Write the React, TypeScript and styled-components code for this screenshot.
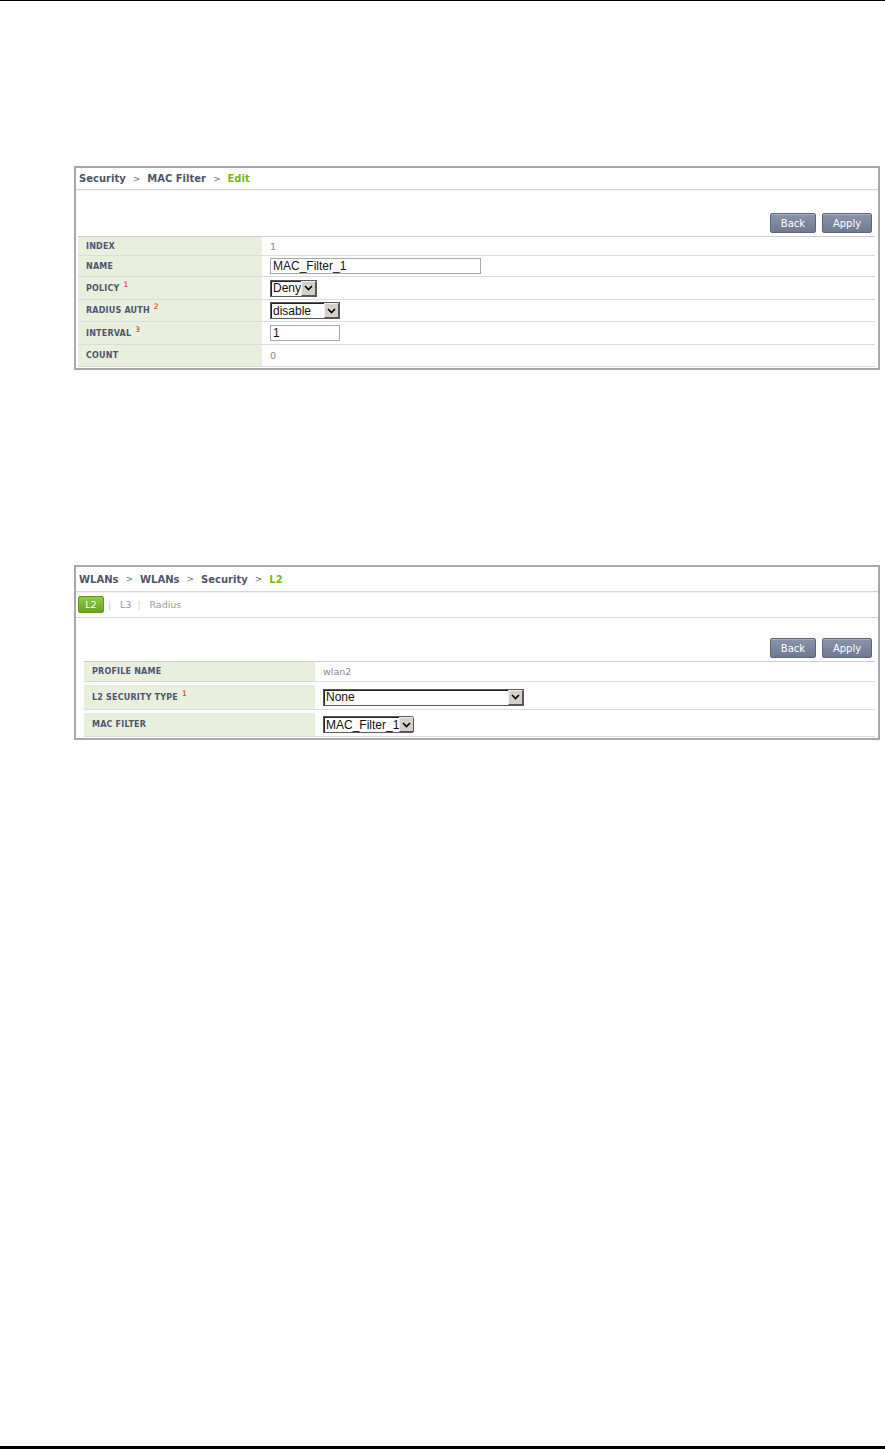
import React from 'react'
import styled, { createGlobalStyle } from 'styled-components'

const GlobalStyle = createGlobalStyle`
  html, body {
    margin: 0;
    padding: 0;
    background: #ffffff;
  }
  body {
    font-family: 'DejaVu Sans', Verdana, sans-serif;
  }
  * {
    box-sizing: border-box;
  }
`

const Page = styled.div({
  width: '885px',
  height: '1449px',
  display: 'flex',
  flexDirection: 'column',
  borderTop: '1px solid #000',
  background: '#fff',
})

const Spacer = styled.div({
  flex: 1,
})

const BottomRule = styled.div({
  height: '3px',
  background: '#000',
})

const Panel = styled.div<{ $top: number }>(props => ({
  marginTop: `${props.$top}px`,
  marginLeft: '74px',
  width: '806px',
  border: '2px solid #a8a8a8',
  background: '#fff',
  paddingBottom: '1px',
}))

const Crumbs = styled.div<{ $height: number }>(props => ({
  height: `${props.$height}px`,
  display: 'flex',
  alignItems: 'center',
  paddingLeft: '3px',
  fontSize: '10px',
  fontWeight: 700,
  color: '#4f5668',
  borderBottom: '1px solid #d6d6d6',
  boxShadow: '0 1px 0 #f2f2f2',
}))

const CrumbSep = styled.span({
  fontWeight: 400,
  color: '#6a6f7a',
  margin: '0 7px',
  fontSize: '9px',
})

const CrumbCurrent = styled.span({
  color: '#7ab51d',
})

const TabRow = styled.div({
  height: '26px',
  display: 'flex',
  alignItems: 'center',
  paddingLeft: '2px',
  borderBottom: '1px solid #d6d6d6',
  fontSize: '9px',
  color: '#a0a0a0',
})

const ActiveTab = styled.div({
  width: '26px',
  height: '17px',
  borderRadius: '2px',
  background: 'linear-gradient(#92c94a, #6aa520)',
  border: '1px solid #5f9a1a',
  color: '#fff',
  fontWeight: 400,
  fontSize: '9.5px',
  display: 'flex',
  alignItems: 'center',
  justifyContent: 'center',
  marginTop: '-1px',
})

const TabSep = styled.span<{ $lead?: number }>(props => ({
  color: '#c8c8c8',
  margin: `0 9px 0 ${props.$lead ?? 6}px`,
}))

const Tab = styled.span({
  color: '#9a9a9a',
  fontSize: '9.5px',
})

const Toolbar = styled.div<{ $height: number }>(props => ({
  height: `${props.$height}px`,
  display: 'flex',
  justifyContent: 'flex-end',
  alignItems: 'flex-end',
  gap: '6px',
  paddingRight: '6px',
  paddingBottom: '3px',
}))

const Button = styled.div<{ $width: number }>(props => ({
  width: `${props.$width}px`,
  height: '20px',
  borderRadius: '2px',
  border: '1px solid #5d667d',
  background: 'linear-gradient(#8a94ac, #6f7992)',
  color: '#fff',
  fontSize: '10px',
  display: 'flex',
  alignItems: 'center',
  justifyContent: 'center',
  boxShadow: 'inset 0 1px 0 rgba(255,255,255,0.25)',
}))

const Table = styled.div<{ $inset: number }>(props => ({
  margin: `0 3px 0 ${props.$inset}px`,
  borderTop: '1px solid #cdcdcd',
}))

const Row = styled.div<{ $height: number; $gap?: number }>(props => ({
  display: 'flex',
  height: `${props.$height + 1}px`,
  borderBottom: '1px solid #dcdcdc',
  marginBottom: `${props.$gap ?? 0}px`,
}))

const Label = styled.div<{ $width: number }>(props => ({
  width: `${props.$width}px`,
  flexShrink: 0,
  background: '#e8efdc',
  display: 'flex',
  alignItems: 'center',
  paddingLeft: '8px',
  fontSize: '8px',
  fontWeight: 700,
  color: '#4d5670',
  letterSpacing: '0.2px',
}))

const Mark = styled.span({
  color: '#e01010',
  fontWeight: 400,
  fontSize: '7.5px',
  marginLeft: '4px',
  position: 'relative',
  top: '-4px',
})

const Value = styled.div({
  flex: 1,
  display: 'flex',
  alignItems: 'center',
  paddingLeft: '8px',
  fontSize: '9.5px',
  color: '#8a8a8a',
})

const TextInput = styled.div<{ $width: number }>(props => ({
  width: `${props.$width}px`,
  height: '16px',
  border: '1px solid #a4a9ae',
  display: 'flex',
  alignItems: 'center',
  paddingLeft: '2px',
  fontFamily: "'Liberation Sans', Arial, sans-serif",
  fontSize: '12px',
  color: '#1a0f1f',
  background: '#fff',
}))

const SelectBox = styled.div<{ $width: number }>(props => ({
  width: `${props.$width}px`,
  height: '17px',
  display: 'flex',
  border: '1px solid #5a5a5a',
  boxShadow: 'inset 1px 1px 0 #222',
  background: '#fff',
  fontFamily: "'Liberation Sans', Arial, sans-serif",
  fontSize: '12px',
  color: '#111',
}))

const SelectText = styled.div({
  flex: 1,
  display: 'flex',
  alignItems: 'center',
  paddingLeft: '2px',
  whiteSpace: 'nowrap',
})

const SelectArrow = styled.div({
  width: '15px',
  flexShrink: 0,
  background: '#d4d0c8',
  borderLeft: '1px solid #eee',
  borderTop: '1px solid #eee',
  borderRight: '1px solid #555',
  borderBottom: '1px solid #555',
  display: 'flex',
  alignItems: 'center',
  justifyContent: 'center',
})

function Select({ width, text }: { width: number; text: string }) {
  return (
    <SelectBox $width={width}>
      <SelectText>{text}</SelectText>
      <SelectArrow>
        <svg width="9" height="6" viewBox="0 0 9 6">
          <path d="M1 1 L4.5 4.5 L8 1" fill="none" stroke="#000" strokeWidth="1.6" />
        </svg>
      </SelectArrow>
    </SelectBox>
  )
}

function Breadcrumb({ items, height }: { items: string[]; height: number }) {
  const last = items[items.length - 1]
  return (
    <Crumbs $height={height}>
      {items.slice(0, -1).map((item, i) => (
        <React.Fragment key={i}>
          <span>{item}</span>
          <CrumbSep>&gt;</CrumbSep>
        </React.Fragment>
      ))}
      <CrumbCurrent>{last}</CrumbCurrent>
    </Crumbs>
  )
}

function Actions({ height }: { height: number }) {
  return (
    <Toolbar $height={height}>
      <Button $width={46}>Back</Button>
      <Button $width={50}>Apply</Button>
    </Toolbar>
  )
}

export default function App() {
  return (
    <>
      <GlobalStyle />
      <Page>
        <Panel $top={165}>
          <Breadcrumb items={['Security', 'MAC Filter', 'Edit']} height={22} />
          <Actions height={46} />
          <Table $inset={2}>
            <Row $height={18}>
              <Label $width={184}>INDEX</Label>
              <Value>1</Value>
            </Row>
            <Row $height={20}>
              <Label $width={184}>NAME</Label>
              <Value>
                <TextInput $width={211}>MAC_Filter_1</TextInput>
              </Value>
            </Row>
            <Row $height={22}>
              <Label $width={184}>
                POLICY<Mark>1</Mark>
              </Label>
              <Value>
                <Select width={47} text="Deny" />
              </Value>
            </Row>
            <Row $height={21}>
              <Label $width={184}>
                RADIUS AUTH<Mark>2</Mark>
              </Label>
              <Value>
                <Select width={70} text="disable" />
              </Value>
            </Row>
            <Row $height={22}>
              <Label $width={184}>
                INTERVAL<Mark>3</Mark>
              </Label>
              <Value>
                <TextInput $width={70}>1</TextInput>
              </Value>
            </Row>
            <Row $height={21}>
              <Label $width={184}>COUNT</Label>
              <Value>0</Value>
            </Row>
          </Table>
        </Panel>

        <Panel $top={195}>
          <Breadcrumb items={['WLANs', 'WLANs', 'Security', 'L2']} height={25} />
          <TabRow>
            <ActiveTab>L2</ActiveTab>
            <TabSep $lead={4}>|</TabSep>
            <Tab>L3</Tab>
            <TabSep>|</TabSep>
            <Tab>Radius</Tab>
          </TabRow>
          <Actions height={43} />
          <Table $inset={8}>
            <Row $height={19} $gap={3}>
              <Label $width={231}>PROFILE NAME</Label>
              <Value>wlan2</Value>
            </Row>
            <Row $height={24} $gap={3}>
              <Label $width={231}>
                L2 SECURITY TYPE<Mark>1</Mark>
              </Label>
              <Value>
                <Select width={201} text="None" />
              </Value>
            </Row>
            <Row $height={23}>
              <Label $width={231}>MAC FILTER</Label>
              <Value>
                <Select width={90} text="MAC_Filter_1" />
              </Value>
            </Row>
          </Table>
        </Panel>
        <Spacer />
        <BottomRule />
      </Page>
    </>
  )
}
